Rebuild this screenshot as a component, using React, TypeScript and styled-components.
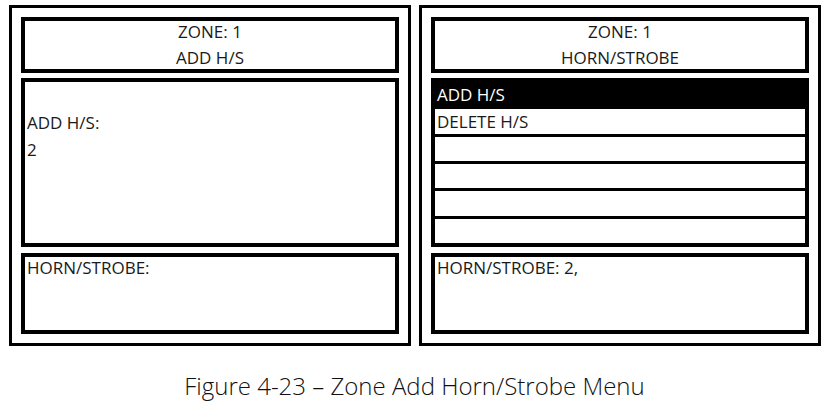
import styled, { createGlobalStyle } from 'styled-components'

const GlobalStyle = createGlobalStyle`
    html, body {
        margin: 0;
        padding: 0;
        background: #ffffff;
    }
    body {
        font-family: "Open Sans", "Liberation Sans", sans-serif;
        color: #1a1a1a;
    }
`

const Page = styled.div`
    width: 829px;
    height: 409px;
    display: flex;
    flex-direction: column;
    overflow: hidden;
`

const ScreenRow = styled.div`
    display: flex;
    gap: 8px;
    padding: 5px 0 0 9px;
`

const Screen = styled.div`
    box-sizing: border-box;
    width: 402px;
    height: 341px;
    border: 3px solid #000;
    padding: 9px 9px 8px 9px;
    display: flex;
    flex-direction: column;
`

const Box = styled.div<{ $height: number; $gap?: number }>`
    box-sizing: border-box;
    height: ${p => p.$height}px;
    margin-top: ${p => p.$gap ?? 0}px;
    border: 4px solid #000;
    font-size: 17px;
    flex-shrink: 0;
`

const Title = styled(Box)`
    display: flex;
    flex-direction: column;
    align-items: center;
    justify-content: center;
    line-height: 26px;
`

const Prompt = styled(Box)`
    padding: 27px 0 0 2px;
    line-height: 27px;
`

const Status = styled(Box)`
    padding: 0 0 0 2px;
    line-height: 22px;
`

const MenuList = styled(Box)`
    display: flex;
    flex-direction: column;
`

const MenuItem = styled.div<{ $selected?: boolean; $first?: boolean }>`
    flex: 1;
    display: flex;
    align-items: center;
    padding-left: 2px;
    border-top: ${p => (p.$first ? 'none' : '3px solid #000')};
    background: ${p => (p.$selected ? '#000' : '#fff')};
    color: ${p => (p.$selected ? '#fff' : '#1a1a1a')};
`

const Caption = styled.div`
    margin-top: 23px;
    text-align: center;
    font-size: 24px;
    font-weight: 300;
    line-height: 34px;
    color: #111;
`

const menu = ['ADD H/S', 'DELETE H/S', '', '', '', '']

export default function App() {
    return (
        <>
            <GlobalStyle />
            <Page>
                <ScreenRow>
                    <Screen>
                        <Title $height={56}>
                            <span>ZONE: 1</span>
                            <span>ADD H/S</span>
                        </Title>
                        <Prompt $height={169} $gap={5}>
                            <div>ADD H/S:</div>
                            <div>2</div>
                        </Prompt>
                        <Status $height={81} $gap={6}>HORN/STROBE:</Status>
                    </Screen>

                    <Screen>
                        <Title $height={56}>
                            <span>ZONE: 1</span>
                            <span>HORN/STROBE</span>
                        </Title>
                        <MenuList $height={169} $gap={5}>
                            {menu.map((label, i) => (
                                <MenuItem key={i} $first={i === 0} $selected={i === 0}>
                                    {label}
                                </MenuItem>
                            ))}
                        </MenuList>
                        <Status $height={81} $gap={6}>HORN/STROBE: 2,</Status>
                    </Screen>
                </ScreenRow>
                <Caption>Figure 4-23 – Zone Add Horn/Strobe Menu</Caption>
            </Page>
        </>
    )
}
